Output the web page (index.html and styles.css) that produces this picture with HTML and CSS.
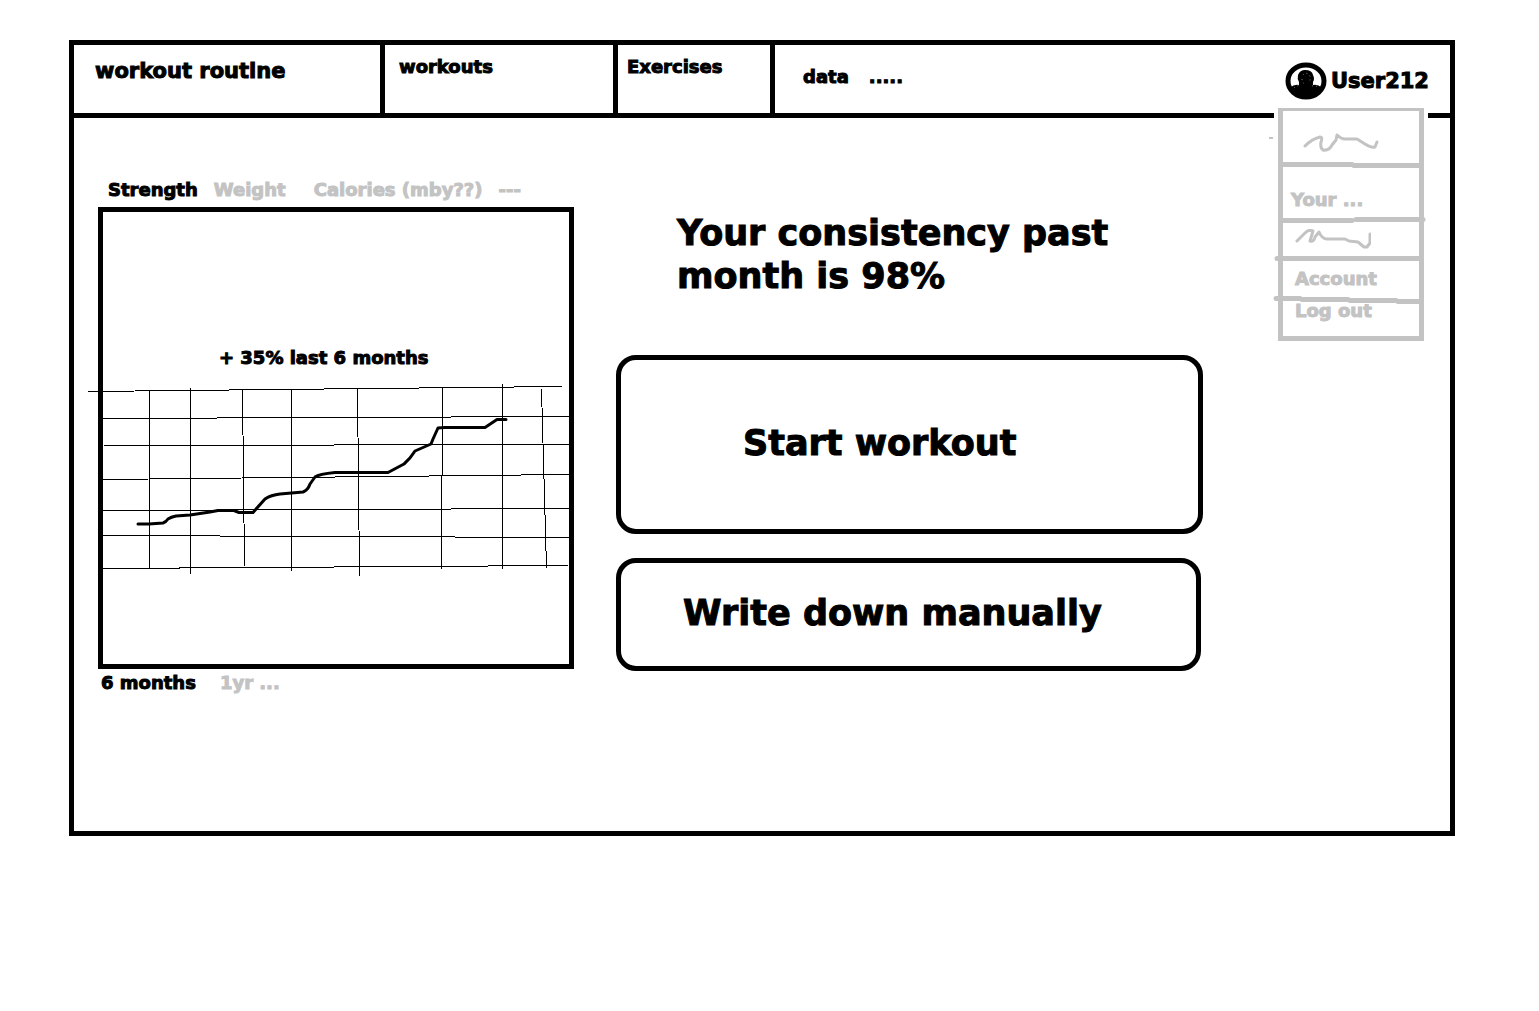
FILE: index.html
```html
<!DOCTYPE html>
<html lang="en">
<head>
<meta charset="utf-8">
<meta name="viewport" content="width=device-width, initial-scale=1">
<title>Workout routine</title>
<link rel="stylesheet" href="styles.css">
</head>
<body>
<div class="frame">
  <header class="topbar">
    <nav class="nav">
      <a class="nav-item nav-brand" href="#">workout routine</a>
      <a class="nav-item nav-workouts" href="#">workouts</a>
      <a class="nav-item nav-exercises" href="#">Exercises</a>
      <div class="nav-item nav-more"><a href="#">data</a><a href="#">.....</a></div>
    </nav>
    <div class="account">
      <button class="user" type="button">
        <svg class="avatar" viewBox="0 0 42 38" aria-hidden="true">
          <ellipse cx="21" cy="19" rx="18" ry="16" fill="#fff" stroke="#000" stroke-width="5"/>
          <path d="M5 26Q9 22 14 23V20Q12 17 13 13Q15 8 20 8Q27 8 28 13Q30 17 28 20V23Q33 22 37 26Q31 35 21 35Q11 35 5 26Z" fill="#000"/>
          <path d="M18 13Q21 9 25 14Q26 18 23 21M17 17Q17 21 20 22M9 26Q12 23 15 24M27 24Q31 23 34 26" fill="none" stroke="#888" stroke-width="1" stroke-dasharray="1 3"/>
        </svg>
        <span>User212</span>
      </button>
      <div class="menu">
        <svg class="menu-lines" viewBox="0 0 146 233" aria-hidden="true">
          <g fill="none" stroke="#c3c3c3" stroke-width="5" stroke-linecap="round">
            <path d="M3 56.500H74M76 57.500H143"/>
            <path d="M3 112.500H74M78 111.500H145"/>
            <path d="M-1 150.500H143"/>
            <path d="M-2 190.500H22M24 191.500H70M72 192.500H118M120 193.500H143"/>
          </g>
          <path d="M-9 30H-5" stroke="#c3c3c3" stroke-width="2"/>
        </svg>
        <ul class="menu-list">
          <li><a href="#" aria-label="Profile">
            <svg class="scribble" width="76" height="20" viewBox="0 0 76 20" aria-hidden="true"><path d="M2 13Q9 6 17 4Q20 4 18 9Q17 15 20 17Q26 18 29 12L33 7L34 2Q38 6 42 6H54L62 11Q68 15 72 14L74 9"/></svg></a></li>
          <li class="row-your"><a href="#">Your ...</a></li>
          <li><a href="#" aria-label="Settings">
            <svg class="scribble" width="76" height="20" viewBox="0 0 76 20" aria-hidden="true"><path d="M2 12L10 4Q14 0 18 2L15 12Q19 13 20 8L24 3Q27 10 32 10H50L54 12L63 13L69 18H72L75 14V5"/></svg></a></li>
          <li><a href="#">Account</a></li>
          <li class="row-logout"><a href="#">Log out</a></li>
        </ul>
      </div>
    </div>
  </header>

  <main class="content">
    <section class="progress">
      <div class="tabs">
        <button class="tab active" type="button">Strength</button>
        <button class="tab" type="button">Weight</button>
        <button class="tab tab-spaced" type="button">Calories (mby??)</button>
        <button class="tab" type="button">---</button>
      </div>
      <figure class="chart">
        <figcaption>+ 35% last 6 months</figcaption>
        <svg class="plot" viewBox="103 384 466 192" role="img" aria-label="Strength over six months">
          <g stroke="#000" stroke-width="1" shape-rendering="crispEdges">
            <path d="M88 391.500L562 386.500M103 418.500L569 416.500M104 445.500L569 444.500M103 479.500L569 474.500M103 510.500L569 508.500M103 535.500L569 537.500M103 568.500L568 565.500"/>
            <path d="M149.500 391V568M190.500 388V574M242.500 390L244.500 566M291.500 390V571M357.500 389L359.500 576M442.500 388L441.500 569M502.500 384V569M541.500 389L546.500 568"/>
          </g>
          <path d="M138 524H149L163 523Q166 522 168 519Q171 517 176 516L190 515L210 512L218 510.500H234L239 512.500H253L265 499Q271 495 280 494L303 492Q308 490 310 484L315 477Q319 474 335 472.500H388L404 464Q410 459 415 451L431 444L433 439L438 428L445 427.500H485L497 419.500H506" fill="none" stroke="#000" stroke-width="3" stroke-linecap="round" stroke-linejoin="round"/>
        </svg>
      </figure>
      <div class="ranges">
        <button class="tab active" type="button">6 months</button>
        <button class="tab" type="button">1yr ...</button>
      </div>
    </section>

    <section class="actions">
      <h1 class="headline">Your consistency past month is 98%</h1>
      <button class="action action-start" type="button">Start workout</button>
      <button class="action action-manual" type="button">Write down manually</button>
    </section>
  </main>
</div>
</body>
</html>
```
FILE: styles.css
```css
* {
  box-sizing: border-box;
}

body {
  margin: 0;
  padding: 40px 84px 40px 69px;
  background: #fff;
  color: #000;
  font-family: "DejaVu Sans", Verdana, sans-serif;
  font-size: 18px;
  font-weight: 700;
  line-height: 24px;
  -webkit-text-stroke: 1px currentColor;
}

a {
  color: inherit;
  text-decoration: none;
}

button {
  padding: 0;
  border: 0;
  background: none;
  color: inherit;
  font: inherit;
  text-align: left;
  white-space: nowrap;
  cursor: pointer;
}

.frame {
  min-height: 796px;
  border: 5px solid #000;
}

.topbar {
  position: relative;
  display: flex;
  justify-content: space-between;
  min-height: 73px;
  border-bottom: 5px solid #000;
}

.nav {
  display: grid;
  grid-template-columns: 311px 233px 157px auto;
}

.nav-item {
  padding: 10px 14px;
  border-right: 5px solid #000;
  white-space: nowrap;
}

.nav-brand {
  padding: 14px 21px;
  font-size: 21px;
}

.nav-exercises {
  padding-left: 9px;
}

.nav-more {
  display: flex;
  gap: 20px;
  padding: 20px 28px;
  border-right: 0;
}

.account {
  padding: 17px 21px 0 0;
}

.user {
  display: flex;
  align-items: center;
  gap: 4px;
  font-size: 21px;
}

.avatar {
  width: 42px;
  height: 38px;
}

.menu {
  position: absolute;
  top: 63px;
  right: 26px;
  width: 146px;
  border: 5px solid #c3c3c3;
  border-top-width: 3px;
  background: #fff;
  box-shadow: 0 0 0 4px #fff;
  color: #c3c3c3;
}

.menu-lines {
  position: absolute;
  top: -3px;
  left: -5px;
  width: 146px;
  height: 233px;
  overflow: visible;
  pointer-events: none;
}

.menu-list {
  display: grid;
  grid-template-rows: 54px 55px 38px 41px 37px;
  margin: 0;
  padding: 0;
  list-style: none;
}

.menu-list li {
  display: flex;
  align-items: center;
  padding-left: 12px;
}

.menu-list li:first-child {
  padding: 10px 0 0 20px;
}

.menu-list .row-your {
  padding: 14px 0 0 8px;
}

.menu-list .row-logout {
  align-items: flex-start;
}

.scribble {
  display: block;
  fill: none;
  stroke: #c3c3c3;
  stroke-width: 3px;
  stroke-linecap: round;
  stroke-linejoin: round;
}

.content {
  display: grid;
  grid-template-columns: minmax(0, 476px) minmax(0, 587px);
  gap: 42px;
  padding: 60px 24px;
}

.tabs,
.ranges {
  display: flex;
  gap: 16px;
}

.tabs {
  padding: 0 0 5px 10px;
}

.ranges {
  gap: 24px;
  padding: 2px 3px;
}

.tab {
  color: #c3c3c3;
}

.tab.active {
  color: #000;
}

.tab-spaced {
  margin-left: 12px;
}

.chart {
  min-height: 462px;
  margin: 0;
  padding-top: 134px;
  border: 5px solid #000;
}

.chart figcaption {
  padding-left: 116px;
}

.plot {
  display: block;
  width: 100%;
  margin-top: 14px;
  overflow: visible;
}

.actions {
  display: flex;
  flex-direction: column;
  gap: 24px;
  padding-top: 34px;
}

.headline {
  margin: 0 0 33px;
  padding-left: 61px;
  font-size: 35px;
  font-weight: 700;
  line-height: 43px;
}

.action {
  padding-bottom: 2px;
  border: 5px solid #000;
  border-radius: 20px;
  font-size: 35px;
  line-height: 43px;
}

.action-start {
  min-height: 179px;
  padding-left: 122px;
}

.action-manual {
  min-height: 113px;
  margin-right: 2px;
  padding-left: 62px;
}
```
